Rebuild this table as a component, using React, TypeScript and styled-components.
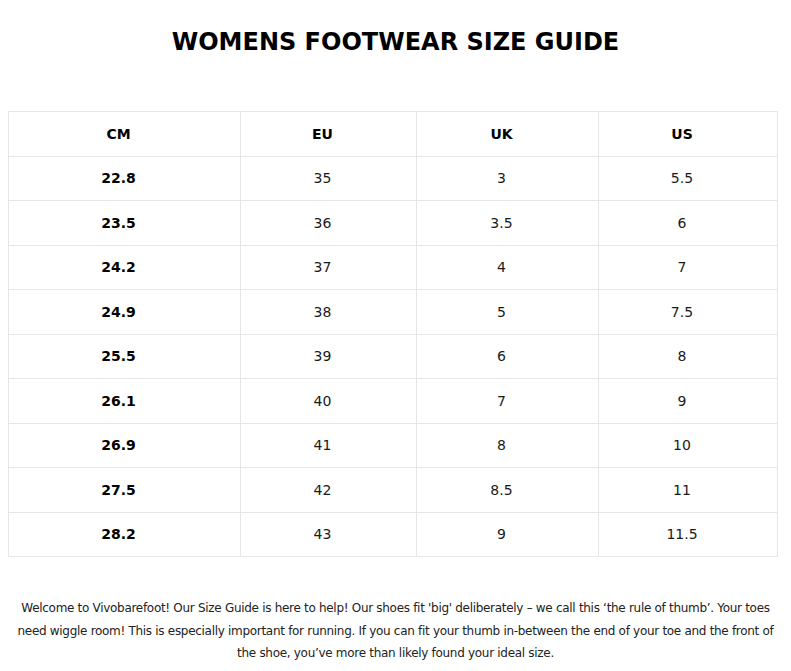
import React from "react";
import styled, { createGlobalStyle } from "styled-components";

const Global = createGlobalStyle`
  body {
    margin: 8px;
    background: #ffffff;
    font-family: "DejaVu Sans", "Noto Sans", sans-serif;
    color: #000;
  }
`;

const Page = styled.div`
  display: flex;
  flex-direction: column;
  align-items: stretch;
`;

const Title = styled.h1`
  margin: 20px 0 0;
  text-align: center;
  font-family: "DejaVu Sans", sans-serif;
  font-weight: 700;
  font-size: 24px;
  line-height: 28px;
  letter-spacing: 0;
  color: #000;
`;

const Table = styled.table`
  margin-top: 55px;
  width: 769px;
  border-collapse: collapse;
  table-layout: fixed;
`;

const Col = styled.col<{ $w: number }>`
  width: ${(p) => p.$w}px;
`;

const HeadCell = styled.th`
  height: 43.5px;
  border: 1px solid #e6e6e6;
  text-align: center;
  font-weight: 700;
  font-size: 14px;
  padding: 0 12px 0 0;
`;

const Cell = styled.td<{ $bold?: boolean }>`
  height: 43.5px;
  border: 1px solid #e6e6e6;
  text-align: center;
  font-weight: ${(p) => (p.$bold ? 700 : 400)};
  font-size: 14px;
  padding: 0 12px 0 0;
  color: ${(p) => (p.$bold ? "#000" : "#1a1a1a")};
`;

const Text = styled.p`
  margin: 40px 0 0;
  align-self: center;
  width: 768px;
  text-align: center;
  font-size: 12px;
  line-height: 22.5px;
  letter-spacing: -0.3px;
  color: #222;
`;

const rows = [
  ["22.8", "35", "3", "5.5"],
  ["23.5", "36", "3.5", "6"],
  ["24.2", "37", "4", "7"],
  ["24.9", "38", "5", "7.5"],
  ["25.5", "39", "6", "8"],
  ["26.1", "40", "7", "9"],
  ["26.9", "41", "8", "10"],
  ["27.5", "42", "8.5", "11"],
  ["28.2", "43", "9", "11.5"],
];

export default function App() {
  return (
    <Page>
      <Global />
      <Title>WOMENS FOOTWEAR SIZE GUIDE</Title>
      <Table>
        <colgroup>
          <Col $w={232} />
          <Col $w={176} />
          <Col $w={182} />
          <Col $w={179} />
        </colgroup>
        <thead>
          <tr>
            <HeadCell>CM</HeadCell>
            <HeadCell>EU</HeadCell>
            <HeadCell>UK</HeadCell>
            <HeadCell>US</HeadCell>
          </tr>
        </thead>
        <tbody>
          {rows.map((r) => (
            <tr key={r[0]}>
              <Cell $bold>{r[0]}</Cell>
              <Cell>{r[1]}</Cell>
              <Cell>{r[2]}</Cell>
              <Cell>{r[3]}</Cell>
            </tr>
          ))}
        </tbody>
      </Table>
      <Text>
        Welcome to Vivobarefoot! Our Size Guide is here to help! Our shoes fit 'big' deliberately – we call this ‘the rule of thumb’. Your toes need wiggle room! This is especially important for running. If you can fit your thumb in-between the end of your toe and the front of the shoe, you’ve more than likely found your ideal size.
      </Text>
    </Page>
  );
}
